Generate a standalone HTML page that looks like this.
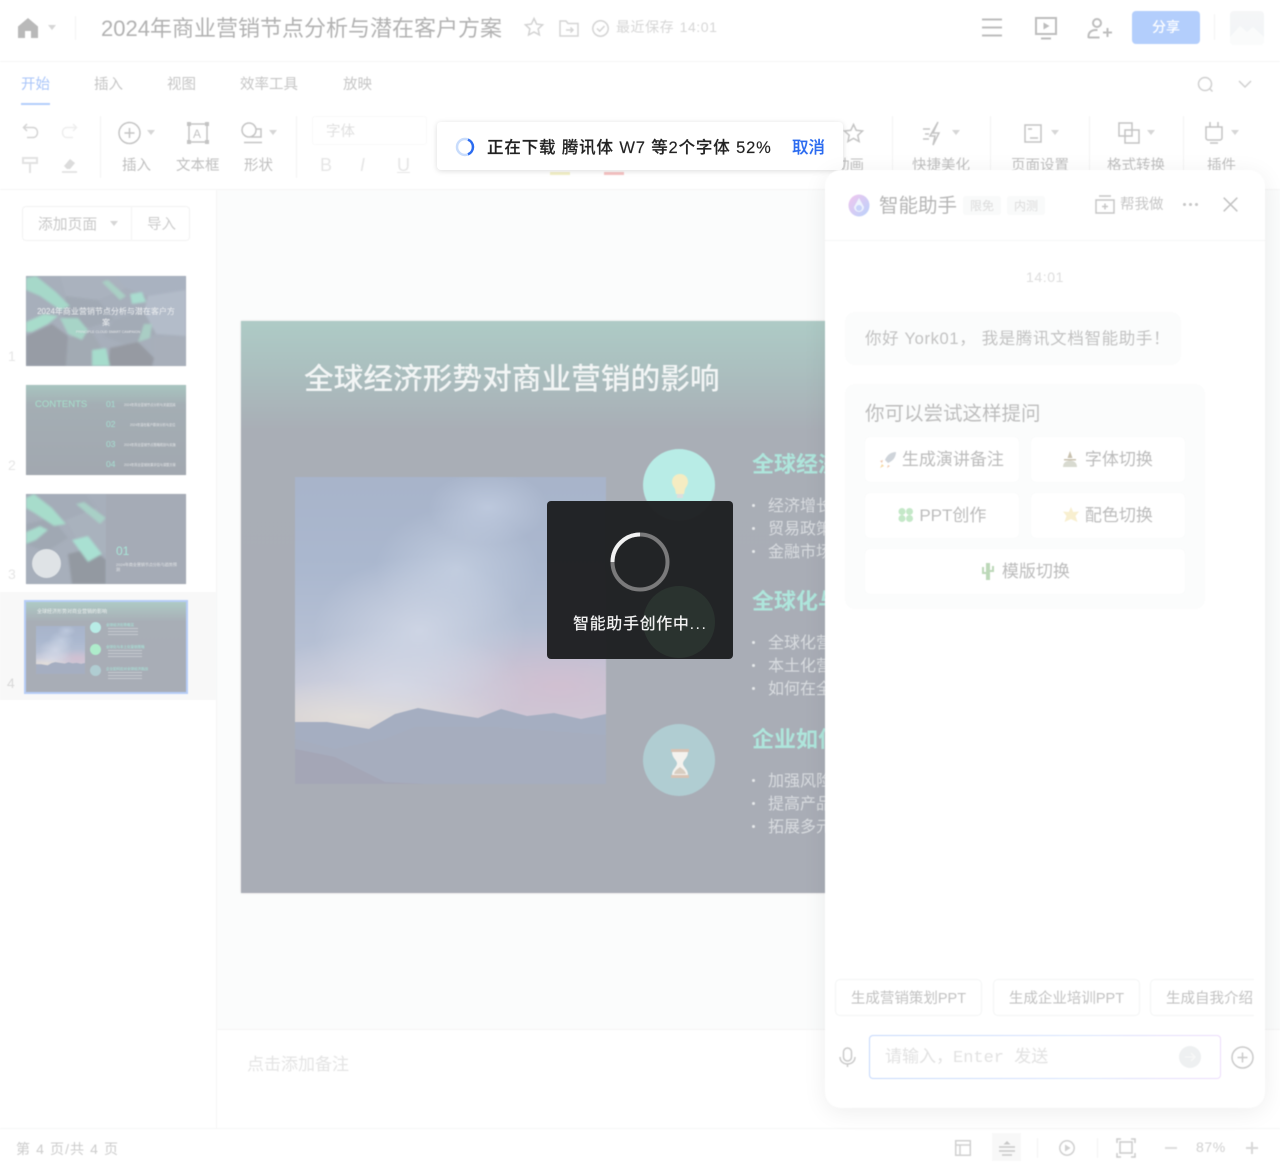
<!DOCTYPE html>
<html lang="zh"><head><meta charset="utf-8"><title>2024年商业营销节点分析与潜在客户方案</title>
<style>
*{box-sizing:border-box}
html,body{margin:0;padding:0;background:#fff}
body{width:1280px;height:1165px;overflow:hidden;position:relative;font-family:"Liberation Sans","Noto Sans CJK SC",sans-serif}
.a{position:absolute}
.t{position:absolute;white-space:nowrap;line-height:20px;height:20px}
#bg{position:absolute;left:0;top:0;width:1280px;height:1165px;filter:blur(.45px)}
.l{color:#bfbfbf;font-size:14.500px}
.h{position:absolute;background:#f5f6f6}
.sep{position:absolute;width:1px;background:#f3f3f3}
svg{position:absolute;overflow:visible}
.ic{fill:none;stroke:#c4c4c4;stroke-width:1.5}
.car{position:absolute;width:0;height:0;border:4px solid transparent;border-top:5px solid #d6d6d6;border-bottom:0}
.b{position:absolute;background:#fff;border-radius:5px;color:#bcbcbc;font-size:17px;text-align:center;line-height:46px;height:45px;box-shadow:0 0 1px #f0f2f2}
.sg{position:absolute;top:979px;height:37px;width:147px;border:1px solid #f3f4f4;border-radius:5px;background:#fff;color:#c2c2c2;font-size:14.500px;line-height:38px;text-align:center;white-space:nowrap}
.bul{position:absolute;width:3px;height:3px;border-radius:50%;background:#e6e8ea;left:752px}
.st{color:#d9dce0;font-size:16px}
.sh{color:#aee6dc;font-size:22px;font-weight:700}
.cb{position:absolute;left:0;top:0;width:160px;height:90px;filter:blur(1px)}
.sky{position:absolute;overflow:hidden;background:
radial-gradient(ellipse 19% 12% at 62% 10%,rgba(205,216,235,.55),rgba(205,216,235,0) 100%),
radial-gradient(ellipse 26% 20% at 52% 30%,rgba(206,216,232,.6),rgba(206,216,232,0) 100%),
radial-gradient(ellipse 34% 24% at 40% 50%,rgba(214,220,234,.75),rgba(214,220,234,0) 100%),
radial-gradient(ellipse 42% 18% at 32% 68%,rgba(218,220,232,.7),rgba(218,220,232,0) 100%),
radial-gradient(ellipse 50% 20% at 85% 68%,rgba(212,190,208,.8),rgba(212,190,208,0) 100%),
radial-gradient(ellipse 50% 12% at 20% 78%,rgba(232,226,214,.85),rgba(232,226,214,0) 100%),
linear-gradient(#a8b4ca 0,#abb8cf 30%,#b6c0d4 55%,#c6c8d7 70%,#d0cbd6 82%)}
.sky svg{left:0;top:0;width:100%;height:100%}
</style></head><body>

<div id="bg">
<!-- top bar -->
<div class="h" style="left:0;top:61px;width:1280px;height:1px"></div>
<svg style="left:17px;top:17px" width="22" height="22" viewBox="0 0 22 22"><path d="M11 1 L21 9.500 V21 H14 V14 H8 V21 H1 V9.500 Z" fill="#b9b9b9"/></svg>
<div class="car" style="left:48px;top:25px"></div>
<div class="sep" style="left:75px;top:16px;height:24px"></div>
<div class="t" style="left:101px;top:18px;height:22px;line-height:22px;font-size:22px;color:#b2b2b2">2024年商业营销节点分析与潜在客户方案</div>
<svg style="left:524px;top:17px" width="20" height="20" viewBox="0 0 20 20"><path class="ic" d="M10 1.500l2.600 5.600 6 .7-4.500 4.100 1.300 6L10 15l-5.400 2.900 1.300-6L1.400 7.800l6-.7z" style="stroke:#d2d2d2"/></svg>
<svg style="left:559px;top:20px" width="20" height="17" viewBox="0 0 20 17"><path class="ic" d="M1 1h6l2 2.500h10V16H1zM7 10h7M11.500 7.500L14 10l-2.500 2.500" style="stroke:#d4d4d4"/></svg>
<svg style="left:592px;top:20px" width="17" height="17" viewBox="0 0 17 17"><circle class="ic" cx="8.500" cy="8.500" r="7.700" style="stroke:#d4d4d4"/><path class="ic" d="M5 8.500l2.700 2.700L12.500 6" style="stroke:#d4d4d4"/></svg>
<div class="t" style="left:616px;top:17px;font-size:14px;color:#d6d6d6;letter-spacing:.55px;word-spacing:1px">最近保存 14:01</div>
<svg style="left:982px;top:18px" width="20" height="19" viewBox="0 0 20 19"><path class="ic" d="M0 1.500h20M0 9.500h20M0 17.500h20" style="stroke:#bdbdbd;stroke-width:2"/></svg>
<svg style="left:1034px;top:16px" width="24" height="24" viewBox="0 0 24 24"><path class="ic" d="M2 2h20v16H2zM7 22.500h10" style="stroke:#bdbdbd;stroke-width:2"/><path d="M9.500 6.500l6 3.500-6 3.500z" fill="#bdbdbd"/></svg>
<svg style="left:1087px;top:17px" width="26" height="22" viewBox="0 0 26 22"><circle class="ic" cx="10" cy="6" r="4" style="stroke:#bdbdbd;stroke-width:2"/><path class="ic" d="M1.500 21v-2c0-3.500 3-6 7-6h2M16 15.500h9M20.500 11v9M1.500 20.500h11" style="stroke:#bdbdbd;stroke-width:2"/></svg>
<div class="a" style="left:1132px;top:11px;width:68px;height:33px;background:#b3cefc;border-radius:4px;color:#fff;font-size:14px;font-weight:500;text-align:center;line-height:33px">分享</div>
<div class="sep" style="left:1214px;top:14px;height:26px"></div>
<div class="a" style="left:1230px;top:11px;width:34px;height:34px;background:linear-gradient(#f5f6f7,#f2f5f7);border-radius:4px;overflow:hidden"><svg style="left:0;top:0" width="34" height="34"><path d="M0 26L10 15l7 6 6-5 11 10v8H0z" fill="#fafbfb"/></svg></div>

<!-- tabs -->
<div class="t" style="left:21px;top:75px;font-size:14.500px;color:#a9c5f9">开始</div>
<div class="a" style="left:21px;top:103px;width:29px;height:2px;background:#b3cdfb"></div>
<div class="t l" style="left:94px;top:75px;color:#c6c6c6">插入</div>
<div class="t l" style="left:167px;top:75px;color:#c6c6c6">视图</div>
<div class="t l" style="left:240px;top:75px;color:#c6c6c6">效率工具</div>
<div class="t l" style="left:343px;top:75px;color:#c6c6c6">放映</div>
<svg style="left:1197px;top:76px" width="17" height="17" viewBox="0 0 17 17"><circle class="ic" cx="8" cy="8" r="6.500" style="stroke:#d0d0d0"/><path class="ic" d="M12.500 12.500l3 3" style="stroke:#d0d0d0"/></svg>
<svg style="left:1238px;top:80px" width="14" height="8" viewBox="0 0 14 8"><path class="ic" d="M1 1l6 6 6-6" style="stroke:#d0d0d0"/></svg>

<!-- ribbon -->
<div class="h" style="left:0;top:189px;width:1280px;height:1px"></div>
<svg style="left:22px;top:123px" width="17" height="16" viewBox="0 0 17 16"><path class="ic" d="M5 1L1.500 4.500 5 8M2 4.500h9c6 0 6 10 0 10H5" style="stroke:#d4d4d4"/></svg>
<svg style="left:61px;top:123px" width="17" height="16" viewBox="0 0 17 16"><path class="ic" d="M12 1l3.500 3.500L12 8M15 4.500H6c-6 0-6 10 0 10h6" style="stroke:#eeeeee"/></svg>
<svg style="left:22px;top:157px" width="16" height="17" viewBox="0 0 16 17"><path class="ic" d="M1 1h14v5H1zM8 6v10" style="stroke:#e2e2e2;stroke-width:2"/></svg>
<svg style="left:61px;top:157px" width="17" height="16" viewBox="0 0 17 16"><path d="M3 9l6-7 5 4-5 6H6z" fill="#dcdcdc"/><path class="ic" d="M1 15h15" style="stroke:#dcdcdc"/></svg>
<div class="sep" style="left:100px;top:116px;height:62px"></div>
<svg style="left:118px;top:121px" width="24" height="24" viewBox="0 0 24 24"><circle class="ic" cx="11.500" cy="12" r="10.500"/><path class="ic" d="M6.500 12h10M11.500 7v10"/></svg>
<div class="car" style="left:147px;top:130px"></div>
<div class="t l" style="left:122px;top:156px">插入</div>
<svg style="left:187px;top:122px" width="22" height="22" viewBox="0 0 22 22"><path class="ic" d="M2 2h18v18H2z"/><path d="M0 0h4v4H0zM18 0h4v4h-4zM0 18h4v4H0zM18 18h4v4h-4z" fill="#c4c4c4"/></svg>
<div class="t" style="left:193px;top:124px;font-size:12px;color:#c4c4c4">A</div>
<div class="t l" style="left:176px;top:156px">文本框</div>
<svg style="left:241px;top:122px" width="22" height="22" viewBox="0 0 22 22"><circle class="ic" cx="8" cy="8" r="7"/><path class="ic" d="M10 15h10V7h-5M3 20.500h18"/></svg>
<div class="car" style="left:269px;top:130px"></div>
<div class="t l" style="left:244px;top:156px">形状</div>
<div class="sep" style="left:296px;top:116px;height:62px"></div>
<div class="a" style="left:312px;top:116px;width:115px;height:29px;border:1px solid #f9f9f9;border-radius:3px"></div>
<div class="t" style="left:326px;top:122px;font-size:14.500px;color:#e0e0e0">字体</div>
<div class="t" style="left:320px;top:155px;font-size:18px;color:#e6e6e6">B</div>
<div class="t" style="left:360px;top:155px;font-size:18px;font-style:italic;color:#e6e6e6">I</div>
<div class="t" style="left:397px;top:155px;font-size:18px;text-decoration:underline;color:#e6e6e6">U</div>
<div class="a" style="left:550px;top:172px;width:20px;height:3px;background:#f3f0c8"></div>
<div class="a" style="left:604px;top:172px;width:20px;height:3px;background:#f6c4c4"></div>
<svg style="left:843px;top:123px" width="21" height="20" viewBox="0 0 21 20"><path class="ic" d="M10.500 1.500l2.700 5.800 6.300.7-4.700 4.300 1.300 6.200-5.600-3.100-5.600 3.100 1.300-6.200L1.500 8l6.300-.7z"/></svg>
<div class="t l" style="left:835px;top:156px">动画</div>
<div class="sep" style="left:892px;top:116px;height:62px"></div>
<svg style="left:922px;top:120px" width="24" height="27" viewBox="0 0 24 27"><path class="ic" d="M16 2l-5 11h6l-6 12 2-9H8zM1 9h7M3 14h4M1 19h6"/></svg>
<div class="car" style="left:952px;top:130px"></div>
<div class="t l" style="left:912px;top:156px">快捷美化</div>
<div class="sep" style="left:990px;top:116px;height:62px"></div>
<svg style="left:1024px;top:124px" width="18" height="19" viewBox="0 0 18 19"><path class="ic" d="M1 1h16v17H1zM4 5h4M6 14h8"/></svg>
<div class="car" style="left:1051px;top:130px"></div>
<div class="t l" style="left:1011px;top:156px">页面设置</div>
<div class="sep" style="left:1089px;top:116px;height:62px"></div>
<svg style="left:1118px;top:122px" width="22" height="22" viewBox="0 0 22 22"><path class="ic" d="M1 1h13v13H1zM7 8h14v13H7z"/></svg>
<div class="car" style="left:1147px;top:130px"></div>
<div class="t l" style="left:1107px;top:156px">格式转换</div>
<div class="sep" style="left:1183px;top:116px;height:62px"></div>
<svg style="left:1205px;top:122px" width="18" height="22" viewBox="0 0 18 22"><path class="ic" d="M1 5h16v11c0 1-1 2-2 2H3c-1 0-2-1-2-2zM5 0v5M13 0v5M5 21h8"/></svg>
<div class="car" style="left:1231px;top:130px"></div>
<div class="t l" style="left:1207px;top:156px">插件</div>

<!-- sidebar -->
<div class="h" style="left:216px;top:190px;width:1px;height:938px"></div>
<div class="a" style="left:22px;top:206px;width:168px;height:35px;border:1px solid #f2f2f2;border-radius:4px"></div>
<div class="sep" style="left:131px;top:206px;height:35px"></div>
<div class="t" style="left:38px;top:215px;font-size:14.800px;color:#c8c8c8">添加页面</div>
<div class="car" style="left:110px;top:221px"></div>
<div class="t" style="left:147px;top:215px;font-size:14.500px;color:#cccccc">导入</div>

<div class="t" style="left:8px;top:346px;font-size:14px;color:#e6e6e6">1</div>
<div class="t" style="left:8px;top:455px;font-size:14px;color:#e6e6e6">2</div>
<div class="t" style="left:8px;top:564px;font-size:14px;color:#e6e6e6">3</div>
<div class="a" style="left:0;top:592px;width:216px;height:108px;background:#f8f8f8"></div>
<div class="t" style="left:7px;top:673px;font-size:14px;color:#d8d8d8">4</div>

<!-- thumb 1 -->
<div class="a" style="left:26px;top:276px;width:160px;height:90px;overflow:hidden;background:#a7afbb;box-shadow:0 0 1px #ddd">
<svg class="cb" viewBox="0 0 160 90">
<polygon points="34,0 90,0 100,12 72,24 40,20" fill="#aab2be"/>
<polygon points="90,0 160,0 160,14 122,20 100,12" fill="#a9b2c0"/>
<polygon points="122,20 160,14 160,60 130,58 118,36" fill="#b3bcc9"/>
<polygon points="40,20 72,24 88,44 62,52 36,40" fill="#a1a9b4"/>
<polygon points="88,44 118,36 130,58 102,70 78,60" fill="#a3abb6"/>
<polygon points="0,60 26,48 42,60 40,90 0,90" fill="#979ca5"/>
<polygon points="42,62 66,56 78,76 66,90 40,90" fill="#a2aab3"/>
<polygon points="84,72 112,66 128,82 126,90 82,90" fill="#969aa2"/>
<polygon points="128,62 160,60 160,90 128,90" fill="#a8afba"/>
<polygon points="0,2 10,0 30,16 44,30 34,34 14,20 0,14" fill="#a6d8c9"/>
<polygon points="0,46 18,38 32,40 22,48 6,56 0,56" fill="#a8dccb"/>
<polygon points="34,42 52,42 62,54 56,64 42,58" fill="#a7d4c7"/>
<polygon points="66,74 80,72 84,90 66,90" fill="#a6dccc"/>
<polygon points="104,18 116,16 120,26 106,28" fill="#a9dccf"/>
<polygon points="76,6 82,4 100,20 94,24" fill="#a9cfc4"/>
<polygon points="118,48 126,48 124,62 112,66" fill="#a9cdc4"/>
</svg>
<div class="a" style="left:9px;top:30px;width:142px;text-align:center;font-size:8px;line-height:11px;color:#eef0f2">2024年商业营销节点分析与潜在客户方案</div>
<div class="a" style="left:50px;top:54px;width:60px;text-align:center;font-size:3.500px;line-height:5px;color:#e6e8ea;white-space:nowrap">PRINCIPLE CLOUD SMART CAMPAIGN</div>
</div>
<!-- thumb 2 -->
<div class="a" style="left:26px;top:385px;width:160px;height:90px;overflow:hidden;background:linear-gradient(#a8c5c0 0,#a4aeb4 22%,#a2a8b0 100%);box-shadow:0 0 1px #ddd">
<div class="t" style="left:9px;top:10px;font-size:9.500px;color:#a6e0cc">CONTENTS</div>
<div class="t" style="left:80px;top:9px;font-size:8.500px;color:#a6dfd2">01</div>
<div class="t" style="left:80px;top:29px;font-size:8.500px;color:#a6dfd2">02</div>
<div class="t" style="left:80px;top:49px;font-size:8.500px;color:#a6dfd2">03</div>
<div class="t" style="left:80px;top:69px;font-size:8.500px;color:#a6dfd2">04</div>
<div class="t" style="left:98px;top:10px;font-size:3.200px;color:#e4e6e8">2024年商业营销节点分析与关键因素</div>
<div class="t" style="left:104px;top:30px;font-size:3.200px;color:#e4e6e8">2024年潜在客户群体分析与定位</div>
<div class="t" style="left:98px;top:50px;font-size:3.200px;color:#e4e6e8">2024年商业营销节点策略规划与实施</div>
<div class="t" style="left:98px;top:70px;font-size:3.200px;color:#e4e6e8">2024年商业营销效果评估与调整方案</div>
</div>
<!-- thumb 3 -->
<div class="a" style="left:26px;top:494px;width:160px;height:90px;overflow:hidden;background:#a5abb6;box-shadow:0 0 1px #ddd">
<div class="a" style="left:0;top:0;width:80px;height:90px;overflow:hidden;background:#a7afbb">
<svg class="cb" viewBox="0 0 160 90">
<polygon points="0,0 60,0 70,14 40,26 10,16" fill="#a4acb8"/>
<polygon points="40,26 70,14 80,30 80,60 50,44" fill="#a9b2bd"/>
<polygon points="0,30 26,24 42,44 20,58 0,50" fill="#a0a8b3"/>
<polygon points="42,60 66,54 80,66 80,90 46,90" fill="#9399a1"/>
<polygon points="0,4 8,0 26,14 40,30 28,32 10,20 0,14" fill="#a7dccb"/>
<polygon points="0,38 14,32 22,36 10,46 0,50" fill="#a8dccd"/>
<polygon points="46,46 62,42 76,60 62,68" fill="#a9e0d2"/>
<polygon points="50,10 58,8 80,24 74,30" fill="#a8d0c6"/>
</svg></div>
<div class="a" style="left:6px;top:55px;width:29px;height:29px;border-radius:50%;background:#dfe3e6"></div>
<div class="t" style="left:90px;top:47px;font-size:12px;color:#a9e6d8">01</div>
<div class="a" style="left:90px;top:68px;width:62px;font-size:4px;line-height:5px;color:#e4e6e8">2024年商业营销节点分析与趋势预测</div>
</div>
<!-- thumb 4 -->
<div class="a" style="left:24px;top:600px;width:164px;height:94px;border:2px solid #b6cdf7;overflow:hidden;background:linear-gradient(#aecac5 0,#a8aeb6 22%,#a8adb6 100%)">
<div class="t" style="left:11px;top:0;font-size:5px;color:#eef1f1">全球经济形势对商业营销的影响</div>
<div class="sky" style="left:10px;top:24px;width:49px;height:48px"><svg viewBox="0 0 311 307" preserveAspectRatio="none"><polygon points="0,245 32,245 74,252 100,237 123,231 157,237 183,241 206,232 232,239 259,236 286,242 311,237 311,307 0,307" fill="#a5aec1"/></svg></div>
<div class="a" style="left:64px;top:20px;width:11px;height:11px;border-radius:50%;background:#b8ece6"></div>
<div class="a" style="left:64px;top:42px;width:11px;height:11px;border-radius:50%;background:#aeeccb"></div>
<div class="a" style="left:64px;top:63px;width:11px;height:11px;border-radius:50%;background:#b0cdd2"></div>
<div class="t" style="left:80px;top:13px;font-size:3.500px;color:#a9e8dc">全球经济形势概览</div>
<div class="t" style="left:80px;top:35px;font-size:3.500px;color:#a9e8dc">全球化与本土化营销策略</div>
<div class="t" style="left:80px;top:57px;font-size:3.500px;color:#a9e8dc">企业如何应对全球经济挑战</div>
<div class="a" style="left:82px;top:26px;width:30px;height:1px;background:#c6cad0;box-shadow:0 3px 0 #c6cad0,0 6px 0 #c6cad0"></div>
<div class="a" style="left:82px;top:48px;width:34px;height:1px;background:#c6cad0;box-shadow:0 3px 0 #c6cad0,0 6px 0 #c6cad0"></div>
<div class="a" style="left:82px;top:70px;width:34px;height:1px;background:#c6cad0;box-shadow:0 3px 0 #c6cad0,0 6px 0 #c6cad0"></div>
</div>

<!-- canvas -->
<div class="a" style="left:217px;top:190px;width:1063px;height:839px;background:#fbfcfc"></div>
<div class="h" style="left:217px;top:1029px;width:1063px;height:1px"></div>
<div class="a" style="left:241px;top:321px;width:620px;height:572px;background:linear-gradient(#aecbc6 0,#abbfbf 50px,#a9aeb6 110px,#a9adb6 100%);box-shadow:0 0 2px #ddd"></div>
<div class="t" style="left:304px;top:362px;height:36px;line-height:36px;font-size:29.700px;font-weight:500;color:#f2f5f5">全球经济形势对商业营销的影响</div>
<div class="sky" style="left:295px;top:477px;width:311px;height:307px"><svg viewBox="0 0 311 307" preserveAspectRatio="none">
<polygon points="0,245 32,245 74,252 100,237 123,231 157,237 183,241 206,232 232,239 259,236 286,242 311,237 311,307 0,307" fill="#a5aec1"/>
<polygon points="0,262 40,272 90,262 120,250 200,250 311,258 311,307 0,307" fill="#a6adbe"/>
<polygon points="0,272 40,280 90,305 130,307 0,307" fill="#a4a6b6"/>
</svg></div>
<div class="a" style="left:643px;top:449px;width:72px;height:72px;border-radius:50%;background:#b8ece6"></div>
<svg style="left:670px;top:473px" width="20" height="26" viewBox="0 0 20 26"><path d="M10 1c5 0 8 3.500 8 8 0 3-2 5-3 7l-1 5H6l-1-5c-1-2-3-4-3-7 0-4.500 3-8 8-8z" fill="#f5ecc2"/><path d="M7 21h6v4H7z" fill="#ddd"/></svg>
<div class="a" style="left:643px;top:586px;width:72px;height:72px;border-radius:50%;background:#aeeccb"></div>
<div class="a" style="left:643px;top:724px;width:72px;height:72px;border-radius:50%;background:#b0cdd2"></div>
<svg style="left:669px;top:748px" width="22" height="31" viewBox="0 0 22 31"><path d="M2 1h18v3H2zM2 27h18v3H2z" fill="#d9c3b4"/><path d="M3 4h16c0 6-5 8-5 11.500S19 21 19 27H3c0-6 5-8 5-11.500S3 10 3 4z" fill="#f4f2ee"/><path d="M5 26c1-4 4-5 6-7 2 2 5 3 6 7z" fill="#d8cdc0"/></svg>
<div class="t sh" style="left:752px;top:452px;height:26px;line-height:26px">全球经济形势概览</div>
<div class="t sh" style="left:752px;top:589px;height:26px;line-height:26px">全球化与本土化营销策略</div>
<div class="t sh" style="left:752px;top:727px;height:26px;line-height:26px">企业如何应对全球经济挑战</div>
<div class="bul" style="top:504px"></div><div class="t st" style="left:768px;top:497px">经济增长放缓</div>
<div class="bul" style="top:527px"></div><div class="t st" style="left:768px;top:520px">贸易政策变化</div>
<div class="bul" style="top:550px"></div><div class="t st" style="left:768px;top:543px">金融市场波动</div>
<div class="bul" style="top:641px"></div><div class="t st" style="left:768px;top:634px">全球化营销策略</div>
<div class="bul" style="top:664px"></div><div class="t st" style="left:768px;top:657px">本土化营销策略</div>
<div class="bul" style="top:687px"></div><div class="t st" style="left:768px;top:680px">如何在全球化中</div>
<div class="bul" style="top:779px"></div><div class="t st" style="left:768px;top:772px">加强风险管理</div>
<div class="bul" style="top:802px"></div><div class="t st" style="left:768px;top:795px">提高产品质量</div>
<div class="bul" style="top:825px"></div><div class="t st" style="left:768px;top:818px">拓展多元市场</div>

<!-- notes & status -->
<div class="t" style="left:247px;top:1055px;font-size:17px;color:#e4e4e4">点击添加备注</div>
<div class="a" style="left:0;top:1129px;width:1280px;height:36px;background:#fff"></div>
<div class="h" style="left:0;top:1128px;width:1280px;height:1px"></div>
<div class="t" style="left:16px;top:1139px;font-size:14px;color:#cccccc;letter-spacing:1.100px">第 4 页/共 4 页</div>
<svg style="left:955px;top:1140px" width="16" height="16" viewBox="0 0 16 16"><path class="ic" d="M.7.700h14.600v14.600H.7zM.7 5h14.600M5 5v10.300" style="stroke:#d0d0d0"/></svg>
<div class="a" style="left:992px;top:1133px;width:29px;height:28px;background:#f8f8f8"></div>
<svg style="left:999px;top:1141px" width="16" height="15" viewBox="0 0 16 15"><path d="M8 0l3.500 3.500h-7z" fill="#c8c8c8"/><path class="ic" d="M0 6h16M0 10h16M3 14h10" style="stroke:#c8c8c8"/></svg>
<div class="sep" style="left:1037px;top:1138px;height:20px"></div>
<svg style="left:1059px;top:1140px" width="16" height="16" viewBox="0 0 16 16"><circle class="ic" cx="8" cy="8" r="7.200" style="stroke:#d0d0d0"/><path d="M6 4.500L11.500 8 6 11.500z" fill="#d0d0d0"/></svg>
<div class="sep" style="left:1097px;top:1138px;height:20px"></div>
<svg style="left:1116px;top:1138px" width="20" height="20" viewBox="0 0 20 20"><path class="ic" d="M4 4h12v11H4zM1 5V1h4M15 1h4v4M1 15v4h4M15 19h4v-4" style="stroke:#cccccc"/></svg>
<div class="a" style="left:1165px;top:1147px;width:12px;height:2px;background:#dcdcdc"></div>
<div class="t" style="left:1196px;top:1137px;font-size:14px;color:#d0d0d0;letter-spacing:.6px">87%</div>
<div class="a" style="left:1246px;top:1147px;width:12px;height:2px;background:#d8d8d8"></div>
<div class="a" style="left:1251px;top:1142px;width:2px;height:12px;background:#d8d8d8"></div>
</div>

<!-- modal -->
<div class="a" style="left:547px;top:501px;width:186px;height:158px;background:rgba(30,31,33,.97);border-radius:4px;overflow:hidden">
<div class="a" style="left:96px;top:85px;width:72px;height:72px;border-radius:50%;background:#2a332f"></div>
<svg style="left:63px;top:31px" width="60" height="60" viewBox="0 0 60 60"><circle cx="30" cy="30" r="27.500" fill="none" stroke="#7a7a7b" stroke-width="4"/><path d="M2.500 30A27.500 27.500 0 0 1 30 2.500" fill="none" stroke="#f2f2f2" stroke-width="4"/></svg>
<div class="t" style="left:26px;top:114px;font-size:16px;font-weight:500;color:#f1f1f1;letter-spacing:.65px">智能助手创作中<span style="letter-spacing:1.500px">...</span></div>
</div>

<!-- toast -->
<div class="a" style="left:437px;top:122px;width:406px;height:48px;background:#fff;border-radius:4px;box-shadow:0 1px 6px rgba(0,0,0,.14)">
<svg style="left:18px;top:15px" width="20" height="20" viewBox="0 0 20 20"><circle cx="10" cy="10" r="8" fill="none" stroke="#c8dcfc" stroke-width="2.500"/><path d="M13 2.600A8 8 0 0 1 13 17.400" fill="none" stroke="#2b6bf0" stroke-width="2.500"/></svg>
<div class="t" style="left:50px;top:16px;font-size:16.500px;color:#222;font-weight:500;letter-spacing:.85px;-webkit-text-stroke:.15px #222">正在下载 腾讯体 W7 等2个字体 52%</div>
<div class="t" style="left:355px;top:16px;font-size:16.500px;color:#2b6bf0;font-weight:500;-webkit-text-stroke:.15px #2b6bf0">取消</div>
</div>

<!-- assistant panel -->
<div class="a" style="left:825px;top:170px;width:440px;height:938px;background:#fff;border-radius:16px;box-shadow:0 4px 24px rgba(0,0,0,.07);overflow:hidden;filter:blur(.4px)">
<svg style="left:23px;top:24px" width="22" height="23" viewBox="0 0 22 23"><defs><linearGradient id="lg" x1="0" y1="0" x2="1" y2="1"><stop offset="0" stop-color="#f1c6ee"/><stop offset="1" stop-color="#b9d2fb"/></linearGradient></defs><ellipse cx="11" cy="11.500" rx="10.500" ry="11" fill="url(#lg)"/><path d="M11 4l5 9a5 5 0 0 1-10 0z" fill="#eef3fd"/><circle cx="11" cy="14" r="3" fill="#c9d3fa"/></svg>
<div class="t" style="left:54px;top:24px;height:24px;line-height:24px;font-size:19.500px;color:#b6b6b6">智能助手</div>
<div class="a" style="left:138px;top:26px;width:38px;height:19px;background:#f9fafa;border-radius:3px;text-align:center;font-size:12px;line-height:20px;color:#dcdcdc">限免</div>
<div class="a" style="left:182px;top:26px;width:38px;height:19px;background:#f9fafa;border-radius:3px;text-align:center;font-size:12px;line-height:20px;color:#dcdcdc">内测</div>
<svg style="left:270px;top:25px" width="20" height="19" viewBox="0 0 20 19"><path class="ic" d="M1 5h18v13H1zM4 1h12M7 11.500h6M10 8.500v6" style="stroke:#c6c6c6"/></svg>
<div class="t" style="left:295px;top:25px;font-size:14.500px;color:#c6c6c6">帮我做</div>
<div class="a" style="left:358px;top:33px;width:3px;height:3px;border-radius:50%;background:#c6c6c6;box-shadow:6px 0 0 #c6c6c6,12px 0 0 #c6c6c6"></div>
<svg style="left:398px;top:27px" width="15" height="15" viewBox="0 0 15 15"><path class="ic" d="M.7.700l13.600 13.600M14.300.700L.7 14.300" style="stroke:#c2c2c2"/></svg>
<div class="h" style="left:0;top:70px;width:440px;height:1px"></div>
<div class="t" style="left:201px;top:97px;font-size:14px;color:#dddddd;letter-spacing:.6px">14:01</div>

<div class="a" style="left:20px;top:142px;width:336px;height:53px;background:#fbfcfc;border-radius:10px"></div>
<div class="t" style="left:40px;top:159px;font-size:16.500px;color:#c2c2c2;letter-spacing:.65px">你好 York01， 我是腾讯文档智能助手！</div>

<div class="a" style="left:20px;top:214px;width:360px;height:225px;background:#fbfcfc;border-radius:10px"></div>
<div class="t" style="left:40px;top:233px;height:22px;line-height:22px;font-size:19.500px;color:#bdbdbd">你可以尝试这样提问</div>
<div class="b" style="left:40px;top:267px;width:154px">　 生成演讲备注</div>
<svg style="left:54px;top:281px" width="18" height="18" viewBox="0 0 18 18"><path d="M17 1c-5 0-9 3-11 8l3 3c5-2 8-6 8-11z" fill="#cfd4da"/><path d="M4 9l-3 1 2 2zM9 14l-1 3 3-2z" fill="#f0c8b0"/><path d="M3 13l2 2-4 2z" fill="#f6d9a6"/></svg>
<div class="b" style="left:206px;top:267px;width:154px">　 字体切换</div>
<svg style="left:236px;top:280px" width="18" height="18" viewBox="0 0 18 18"><path d="M9 1l2.500 7h-5z" fill="#c9c2b0"/><path d="M3 9h12v1.500H3z" fill="#c9c2b0"/><path d="M2 17c0-4 3-6.500 7-6.500s7 2.500 7 6.500z" fill="#d8dad0"/></svg>
<div class="b" style="left:40px;top:323px;width:154px">　 PPT创作</div>
<svg style="left:72px;top:336px" width="18" height="18" viewBox="0 0 18 18"><g fill="#c4e8c8"><circle cx="5" cy="5.500" r="3.500"/><circle cx="12.500" cy="5.500" r="3.500"/><circle cx="5" cy="12.500" r="3.500"/><circle cx="12.500" cy="12.500" r="3.500"/></g></svg>
<div class="b" style="left:206px;top:323px;width:154px">　 配色切换</div>
<svg style="left:237px;top:336px" width="18" height="18" viewBox="0 0 18 18"><path d="M9 1l2.200 5 5.800-.5-3.500 4.500 2 6-6.500-3-6.500 3 2-6L1 5.500 6.800 6z" fill="#f8efd0"/></svg>
<div class="b" style="left:40px;top:379px;width:320px">　 模版切换</div>
<svg style="left:154px;top:392px" width="18" height="18" viewBox="0 0 18 18"><path d="M7 1h4v17H7z" fill="#bcd8b8"/><path d="M3 5h2v5h3v2H3zM15 4h-2v4h-3v2h5z" fill="#bcd8b8"/></svg>

<div class="sg" style="left:10px;top:809px">生成营销策划PPT</div>
<div class="sg" style="left:168px;top:809px">生成企业培训PPT</div>
<div class="a" style="left:325px;top:809px;width:104px;height:37px;overflow:hidden"><div class="sg" style="left:0;top:0;width:125px;text-align:left;padding-left:15px">生成自我介绍PPT</div></div>

<svg style="left:14px;top:877px" width="17" height="21" viewBox="0 0 17 21"><rect class="ic" x="4.500" y="1" width="8" height="13" rx="4" style="stroke:#cacaca"/><path class="ic" d="M1 10c0 4 3 7 7.500 7s7.500-3 7.500-7M8.500 17v3" style="stroke:#cacaca"/></svg>
<div class="a" style="left:44px;top:865px;width:352px;height:44px;border-radius:4px;padding:1px;background:linear-gradient(90deg,#c4d8fc,#d8e4fd 60%,#ecdcfb)"><div style="width:100%;height:100%;background:#fff;border-radius:3px"></div></div>
<div class="t" style="left:60px;top:879px;font-family:'Liberation Mono','Noto Sans CJK SC',monospace;font-size:17px;color:#e2e2e2">请输入，Enter 发送</div>
<div class="a" style="left:354px;top:876px;width:22px;height:22px;border-radius:50%;background:#eef0f1"></div>
<svg style="left:359px;top:881px" width="12" height="12" viewBox="0 0 12 12"><path d="M1 6h10M7 2l4 4-4 4" fill="none" stroke="#f8f8f8" stroke-width="1.300"/></svg>
<svg style="left:406px;top:876px" width="23" height="23" viewBox="0 0 23 23"><circle class="ic" cx="11.500" cy="11.500" r="10.500" style="stroke:#cacaca"/><path class="ic" d="M6.500 11.500h10M11.500 6.500v10" style="stroke:#cacaca"/></svg>
</div>
</body></html>
